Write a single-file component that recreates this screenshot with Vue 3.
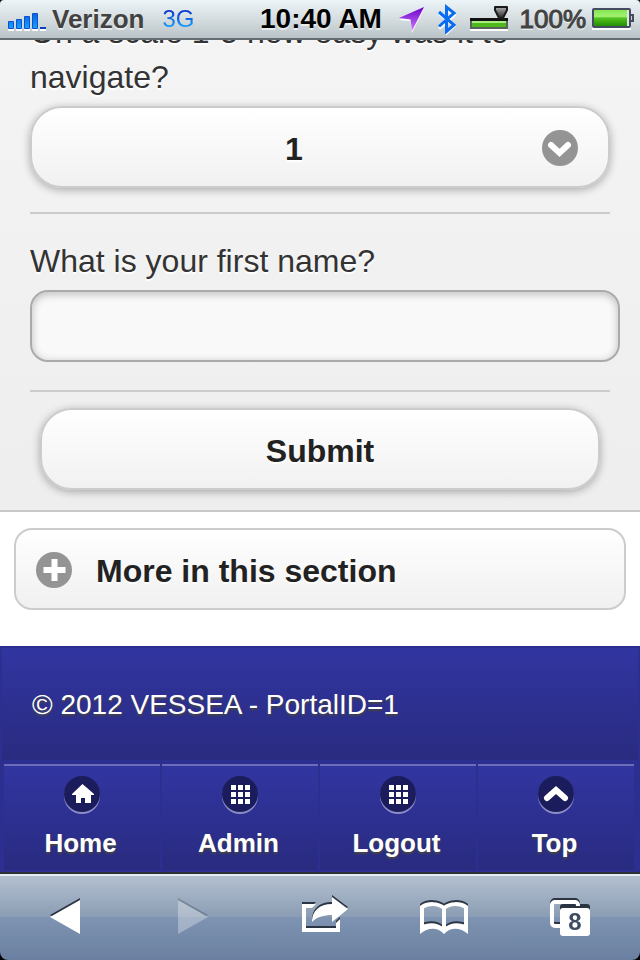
<script setup>
import { ref } from 'vue'

const rating = ref('1')
const firstName = ref('')
const links = [
  { label: 'Home', icon: 'home' },
  { label: 'Admin', icon: 'grid' },
  { label: 'Logout', icon: 'grid' },
  { label: 'Top', icon: 'up' },
]
const cells = [0, 1, 2, 3, 4, 5, 6, 7, 8].map((i) => ({ x: 9 + (i % 3) * 7, y: 9 + Math.floor(i / 3) * 7 }))
</script>

<template>
  <div class="page">
    <header class="status">
      <div class="side">
        <svg class="signal" width="38" height="20" viewBox="0 0 38 20" aria-hidden="true">
          <defs>
            <linearGradient id="sig" x1="0" y1="0" x2="0" y2="1">
              <stop offset="0" stop-color="#0a62e0" />
              <stop offset="1" stop-color="#16a0fa" />
            </linearGradient>
          </defs>
          <g fill="url(#sig)" stroke="#0a54d4" stroke-width="1">
            <path d="M.5 9.500h5v7h-5zM8.500 7.500h5v9h-5zM16.500 4.500h5v12h-5zM24.500 1.500h5v15h-5z" />
          </g>
          <path d="M32 15h6v2h-6z" fill="#0a3fc4" />
        </svg>
        <span class="carrier">Verizon</span>
        <span class="network">3G</span>
      </div>
      <div class="time">10:40 AM</div>
      <div class="side end">
        <svg width="28" height="28" viewBox="0 0 28 28" aria-hidden="true">
          <defs>
            <linearGradient id="loc" x1="0" y1="0" x2="0" y2="1">
              <stop offset="0" stop-color="#6a00c8" />
              <stop offset="1" stop-color="#d07cff" />
            </linearGradient>
          </defs>
          <path d="M26 4 14 28 12.500 16 1 15z" fill="#fff" />
          <path d="M26 2 14 26 12.500 14.500 1 13z" fill="url(#loc)" />
        </svg>
        <svg class="bluetooth" width="20" height="32" viewBox="0 0 20 32" aria-hidden="true">
          <path d="M2 10 17 23 9.500 30V6L17 12.500 2 25.500" fill="none" stroke="#fff" stroke-width="3" />
          <path d="M2 9 17 22 9.500 28.500V4L17 10 2 23.500" fill="none" stroke="#0a6cf0" stroke-width="3" />
        </svg>
        <svg class="device" width="38" height="26" viewBox="0 0 38 26" aria-hidden="true">
          <defs>
            <linearGradient id="funnel" x1="0" y1="0" x2="0" y2="1">
              <stop offset="0" stop-color="#b0b0b0" />
              <stop offset="1" stop-color="#222" />
            </linearGradient>
          </defs>
          <path d="M0 13h38v12H0z" fill="#fff" />
          <path d="M0 12h38v11H0z" fill="#5a635a" />
          <path d="M0 12h38v3H0z" fill="#111" />
          <path d="M2 15h34v6H2z" fill="#4fb81c" />
          <path d="M2 15h34v2H2z" fill="#a8ec80" />
          <path d="M25 1h12v3l-4 8h-4l-4-8z" fill="url(#funnel)" stroke="#1a1a1a" stroke-width="2" stroke-linejoin="round" />
        </svg>
        <span class="percent">100%</span>
        <svg width="42" height="24" viewBox="0 0 42 24" aria-hidden="true">
          <defs>
            <linearGradient id="bat" x1="0" y1="0" x2="0" y2="1">
              <stop offset="0" stop-color="#83e650" />
              <stop offset=".4" stop-color="#a3f272" />
              <stop offset=".5" stop-color="#55c420" />
              <stop offset="1" stop-color="#248d05" />
            </linearGradient>
          </defs>
          <path d="M1 4h37v18H1z" fill="none" stroke="#fff" stroke-width="2" />
          <path d="M38 8h3v6h-3" fill="#c5cdd2" stroke="#454b60" stroke-width="2" />
          <rect x="1" y="2" width="37" height="18" rx="1" fill="#dfe8e0" stroke="#454b60" stroke-width="2" />
          <path d="M2 3h33v16H2z" fill="url(#bat)" />
        </svg>
      </div>
    </header>

    <main class="content">
      <form class="survey" @submit.prevent>
        <div class="field">
          <label for="rating">On a scale 1-5 how easy was it to navigate?</label>
          <div class="select-wrap">
            <select id="rating" v-model="rating" class="pill">
              <option v-for="n in 5" :key="n" :value="String(n)">{{ n }}</option>
            </select>
            <svg class="arrow" width="36" height="36" viewBox="0 0 36 36" aria-hidden="true">
              <circle cx="18" cy="18" r="18" fill="#949494" />
              <path d="M9 15l8.500 8 8.500-8" fill="none" stroke="#fff" stroke-width="6" stroke-linecap="round" />
            </svg>
          </div>
        </div>
        <div class="field name-field">
          <label for="first">What is your first name?</label>
          <input id="first" v-model="firstName" type="text" />
        </div>
        <button class="pill submit" type="submit">Submit</button>
      </form>

      <section class="more">
        <button class="collapsible" type="button" aria-expanded="false">
          <svg width="36" height="36" viewBox="0 0 36 36" aria-hidden="true">
            <circle cx="18" cy="18" r="18" fill="#949494" />
            <path d="M18.500 7v22M7.500 18h22" stroke="#fff" stroke-width="6" />
          </svg>
          <span>More in this section</span>
        </button>
      </section>
    </main>

    <footer class="footer">
      <p class="copyright">© 2012 VESSEA - PortalID=1</p>
      <nav class="links">
        <a v-for="link in links" :key="link.label" href="#">
          <svg width="36" height="38" viewBox="0 0 36 38" aria-hidden="true">
            <circle cx="18" cy="20" r="18" fill="#8c8dc9" />
            <circle cx="18" cy="18" r="18" fill="#1b1c5b" />
            <path v-if="link.icon === 'home'" d="M18.500 8 30 18v1h-3v8h-6v-5h-4v5h-5v-8H8v-1z" fill="#fff" />
            <path v-else-if="link.icon === 'up'" d="M9 22l9-8 9 8" fill="none" stroke="#fff" stroke-width="6" stroke-linecap="round" />
            <g v-else fill="#fff">
              <rect v-for="(c, i) in cells" :key="i" :x="c.x" :y="c.y" width="5" height="5" />
            </g>
          </svg>
          <span>{{ link.label }}</span>
        </a>
      </nav>
    </footer>

    <div class="toolbar">
      <button type="button" aria-label="Back">
        <svg width="30" height="38" viewBox="0 0 30 38"><path d="M30 3v34L0 20z" fill="#fff" /></svg>
      </button>
      <button type="button" aria-label="Forward" class="faded">
        <svg width="30" height="38" viewBox="0 0 30 38"><path d="M0 3v34l30-17z" fill="#fff" /></svg>
      </button>
      <button type="button" aria-label="Share">
        <svg width="46" height="38" viewBox="0 0 46 38">
          <path d="M0 7H14L10 11H4V31H34V26L38 22V35H0z" fill="#fff" />
          <path d="M10 25C10 14 17 7 30 7V0l16 12L30 25v-7c-9 0-15 2-20 7z" fill="#fff" />
        </svg>
      </button>
      <button type="button" aria-label="Bookmarks">
        <svg width="48" height="38" viewBox="0 0 48 38">
          <path d="M2 34V10C8 6 18 6 24 11 30 6 40 6 46 10V34M24 10V34" fill="none" stroke="#fff" stroke-width="4" />
          <path d="M0 29C8 25 18 25 24 31 30 25 40 25 48 29V37C40 30 30 30 24 37 18 30 8 30 0 37z" fill="#fff" />
        </svg>
      </button>
      <button type="button" aria-label="8 open pages" class="tabs">
        <svg width="40" height="40" viewBox="0 0 40 40">
          <rect x="2" y="5" width="26" height="24" rx="3" fill="none" stroke="#fff" stroke-width="4" />
          <rect class="front" x="10" y="11" width="30" height="28" rx="3" fill="#fff" />
          <text x="25" y="33" text-anchor="middle">8</text>
        </svg>
      </button>
    </div>
  </div>
</template>

<style>
body {
  margin: 0;
  background: #000;
}
</style>

<style scoped>
.page {
  display: flex;
  flex-direction: column;
  min-height: 100vh;
  overflow: hidden;
  font-family: "Liberation Sans", Arial, sans-serif;
  color: #333;
}
.page * {
  box-sizing: border-box;
}
.page svg {
  display: block;
  flex: none;
}
button,
select,
input {
  font: inherit;
  color: inherit;
  margin: 0;
}
.status {
  position: relative;
  z-index: 1;
  display: grid;
  grid-template-columns: 1fr auto 1fr;
  align-items: center;
  height: 40px;
  padding: 0 6px 0 8px;
  border-bottom: 2px solid #656d72;
  border-radius: 4px 4px 0 0;
  background: linear-gradient(#edf4f7, #d5dde0 50%, #b9c3c7);
  font-size: 26px;
  font-weight: bold;
  color: #424242;
  text-shadow: 0 2px 0 rgba(255, 255, 255, 0.6);
  white-space: nowrap;
}
.side {
  display: flex;
  align-items: center;
}
.end {
  justify-content: flex-end;
}
.signal {
  margin: 6px 6px 0 0;
  filter: drop-shadow(0 2px 0 #fff);
}
.network {
  margin-left: 18px;
  font-size: 24px;
  font-weight: normal;
  color: transparent;
  text-shadow: none;
  background: linear-gradient(#0734cc 20%, #1aaaff 85%);
  background-clip: text;
}
.time {
  font-size: 28px;
  color: #000;
}
.bluetooth {
  margin-left: 11px;
}
.device {
  margin: 0 12px 0 13px;
}
.percent {
  margin-right: 6px;
  font-weight: normal;
  -webkit-text-stroke: 1px #424242;
}
.content {
  flex: 1;
  background: #fff;
}
.survey {
  margin-top: -30px;
  padding: 0 30px 20px;
  border-bottom: 2px solid #c8c8c8;
  background: linear-gradient(#f4f4f4, #eee);
}
.field {
  padding-bottom: 24px;
  border-bottom: 2px solid #ccc;
}
.field label {
  display: block;
  padding: 0 0 6px;
  font-size: 32px;
  line-height: 45px;
  text-shadow: 0 2px 0 #fff;
}
.select-wrap {
  position: relative;
}
.pill {
  display: block;
  width: 100%;
  height: 82px;
  border: 2px solid #ccc;
  border-radius: 32px;
  background: linear-gradient(#fff, #f1f1f1);
  box-shadow: 0 2px 8px rgba(0, 0, 0, 0.3);
  font-size: 32px;
  font-weight: bold;
  color: #222;
  text-shadow: 0 2px 0 #fff;
}
select.pill {
  appearance: none;
  padding: 4px 70px 0 18px;
  text-align: center;
  text-align-last: center;
}
.arrow {
  position: absolute;
  top: 24px;
  right: 32px;
}
.name-field {
  padding: 25px 0 28px;
}
.name-field input {
  display: block;
  width: calc(100% + 10px);
  height: 72px;
  padding: 0 16px;
  border: 2px solid #aaa;
  border-radius: 18px;
  background: #f9f9f9;
  box-shadow: inset 0 2px 8px rgba(0, 0, 0, 0.25);
  font-size: 32px;
}
.survey .submit {
  width: calc(100% - 20px);
  margin: 16px 10px 0;
  padding: 4px 0 0;
}
.more {
  padding: 16px 14px 36px;
}
.collapsible {
  display: flex;
  align-items: center;
  gap: 24px;
  width: 100%;
  height: 82px;
  padding: 2px 20px 0;
  border: 2px solid #ccc;
  border-radius: 18px;
  background: linear-gradient(#fff, #f0f0f0);
  font-size: 32px;
  font-weight: bold;
  color: #222;
  text-shadow: 0 2px 0 #fff;
}
.collapsible span {
  padding-top: 2px;
}
.footer {
  padding: 2px 0;
  background: #2c2e90;
  color: #fff;
  text-shadow: 0 2px 2px #444;
}
.copyright {
  margin: 0 2px 4px;
  padding: 35px 30px 33px;
  background: linear-gradient(#3135a0, #292b80);
  font-size: 28px;
  line-height: 44px;
}
.links {
  display: grid;
  grid-template-columns: repeat(4, 1fr);
  gap: 2px;
  padding: 0 6px 0 4px;
}
.links a {
  display: flex;
  flex-direction: column;
  align-items: center;
  gap: 14px;
  height: 106px;
  padding-top: 10px;
  border-top: 2px solid #6b6dbb;
  background: linear-gradient(#3135a0, #292b80);
  color: #fff;
  font-size: 26px;
  line-height: 30px;
  font-weight: bold;
  text-decoration: none;
}
.links a span {
  margin-right: 3px;
}
.toolbar {
  display: grid;
  grid-template-columns: 130fr 126fr 138fr 100fr 146fr;
  height: 88px;
  border-top: 2px solid #2d3138;
  border-radius: 0 0 8px 8px;
  background: linear-gradient(#e6ebf0 2px, #b3c0cf 2px, #8b9db4 50%, #7e94b2 50%, #6b80a0);
}
.toolbar button {
  display: flex;
  justify-content: center;
  align-items: flex-start;
  padding: 23px 0 0;
  border: 0;
  background: none;
}
.toolbar svg {
  overflow: visible;
  filter: drop-shadow(0 -2px 0 #2b3442);
}
.toolbar .faded svg {
  opacity: 0.3;
}
.toolbar .tabs {
  padding-left: 6px;
}
.tabs .front {
  filter: drop-shadow(0 -2px 0 #2b3442);
}
.tabs text {
  font-size: 24px;
  font-weight: bold;
  fill: #3f4d63;
}
</style>
